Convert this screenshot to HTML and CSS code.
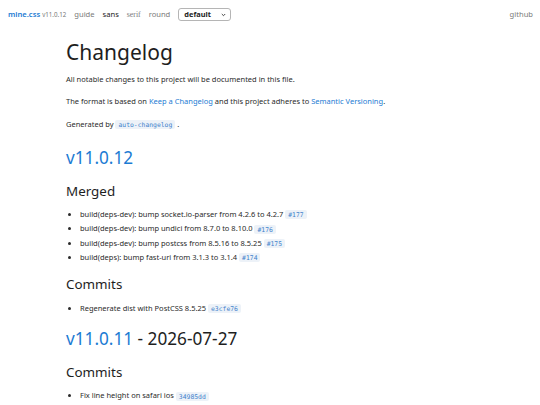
FILE: index.html
```html
<!DOCTYPE html>
<html>
<head>
<meta charset="utf-8">
<link rel="stylesheet" href="styles.css">
</head>
<body>
<nav class="nav">
  <div class="nav-left">
    <div class="brand-group"><a class="brand" href="#">mine.css</a><span class="ver">v11.0.12</span></div>
    <a class="nav-link" href="#">guide</a>
    <a class="nav-link active" href="#">sans</a>
    <a class="nav-link serif" href="#">serif</a>
    <a class="nav-link" href="#">round</a>
    <div class="select-wrap">
      <select class="theme"><option>default</option></select>
      <svg class="chev" width="5" height="4" viewBox="0 0 5 4"><path d="M0.8 1 L2.5 2.7 L4.2 1" fill="none" stroke="#333" stroke-width="0.9"/></svg>
    </div>
  </div>
  <a class="nav-link" href="#">github</a>
</nav>
<main class="main">
  <h1>Changelog</h1>
  <p>All notable changes to this project will be documented in this file.</p>
  <p>The format is based on <a href="#">Keep a Changelog</a> and this project adheres to <a href="#">Semantic Versioning</a>.</p>
  <p>Generated by <code>auto-changelog</code> .</p>
  <h2><a href="#">v11.0.12</a></h2>
  <h3>Merged</h3>
  <ul>
    <li>build(deps-dev): bump socket.io-parser from 4.2.6 to 4.2.7 <code>#177</code></li>
    <li>build(deps-dev): bump undici from 8.7.0 to 8.10.0 <code>#176</code></li>
    <li>build(deps-dev): bump postcss from 8.5.16 to 8.5.25 <code>#175</code></li>
    <li>build(deps): bump fast-uri from 3.1.3 to 3.1.4 <code>#174</code></li>
  </ul>
  <h3>Commits</h3>
  <ul>
    <li>Regenerate dist with PostCSS 8.5.25 <code>e3cfe76</code></li>
  </ul>
  <h2><a href="#">v11.0.11</a> - 2026-07-27</h2>
  <h3>Commits</h3>
  <ul>
    <li>Fix line height on safari ios <code>34985dd</code></li>
  </ul>
</main>
</body>
</html>
```
FILE: styles.css
```css
html, body { margin: 0; padding: 0; background: #fff; }
body {
  font-family: "Noto Sans", sans-serif;
  color: #2a2a2a;
  font-size: 7.5px;
  line-height: 13px;
}
a { color: #1c7bd3; text-decoration: none; }
.nav {
  display: flex;
  justify-content: space-between;
  align-items: center;
  height: 28px;
  padding: 0 7px 0 8px;
  font-size: 7.6px;
}
.nav-left { display: flex; align-items: center; gap: 8px; }
.brand-group { display: flex; align-items: baseline; gap: 2px; }
.brand { font-weight: 600; color: #1c7bd3; }
.ver { font-size: 6.2px; color: #777; }
.nav-link { color: #7a7a7a; }
.nav-link.active { color: #222; }
.nav-link.serif { font-family: "Liberation Serif", serif; font-size: 7.8px; }
.select-wrap { position: relative; display: flex; }
.theme {
  appearance: none;
  -webkit-appearance: none;
  font-family: "Noto Sans", sans-serif;
  font-size: 7.4px;
  font-weight: 700;
  color: #222;
  height: 13px;
  width: 53px;
  padding: 0 0 0 5px;
  margin: 0;
  border: 1px solid #b5b5b5;
  border-radius: 3px;
  background: #fff;
  line-height: 11px;
}
.chev { position: absolute; right: 5px; top: 5px; }
.main { padding: 0 66px; }
h1 { font-size: 21px; font-weight: 400; margin: 12px 0 7.6px; line-height: 1.2; color: #1e1e1e; }
p { margin: 0 0 9.5px; }
h2 { font-size: 17.2px; font-weight: 400; margin: 16.3px 0 13.8px; line-height: 1.2; color: #1e1e1e; }
ul + h2 { margin-top: 13.3px; }
h3 { font-size: 13.4px; font-weight: 400; margin: 0 0 9.4px; line-height: 1.2; color: #1e1e1e; }
ul { margin: 0 0 11px; padding-left: 14px; }
li { line-height: 13.3px; }
code {
  font-family: "DejaVu Sans Mono", monospace;
  font-size: 6.4px;
  color: #3f82cc;
  background: #edf2f8;
  padding: 0.5px 3px;
  border-radius: 2px;
}
```
